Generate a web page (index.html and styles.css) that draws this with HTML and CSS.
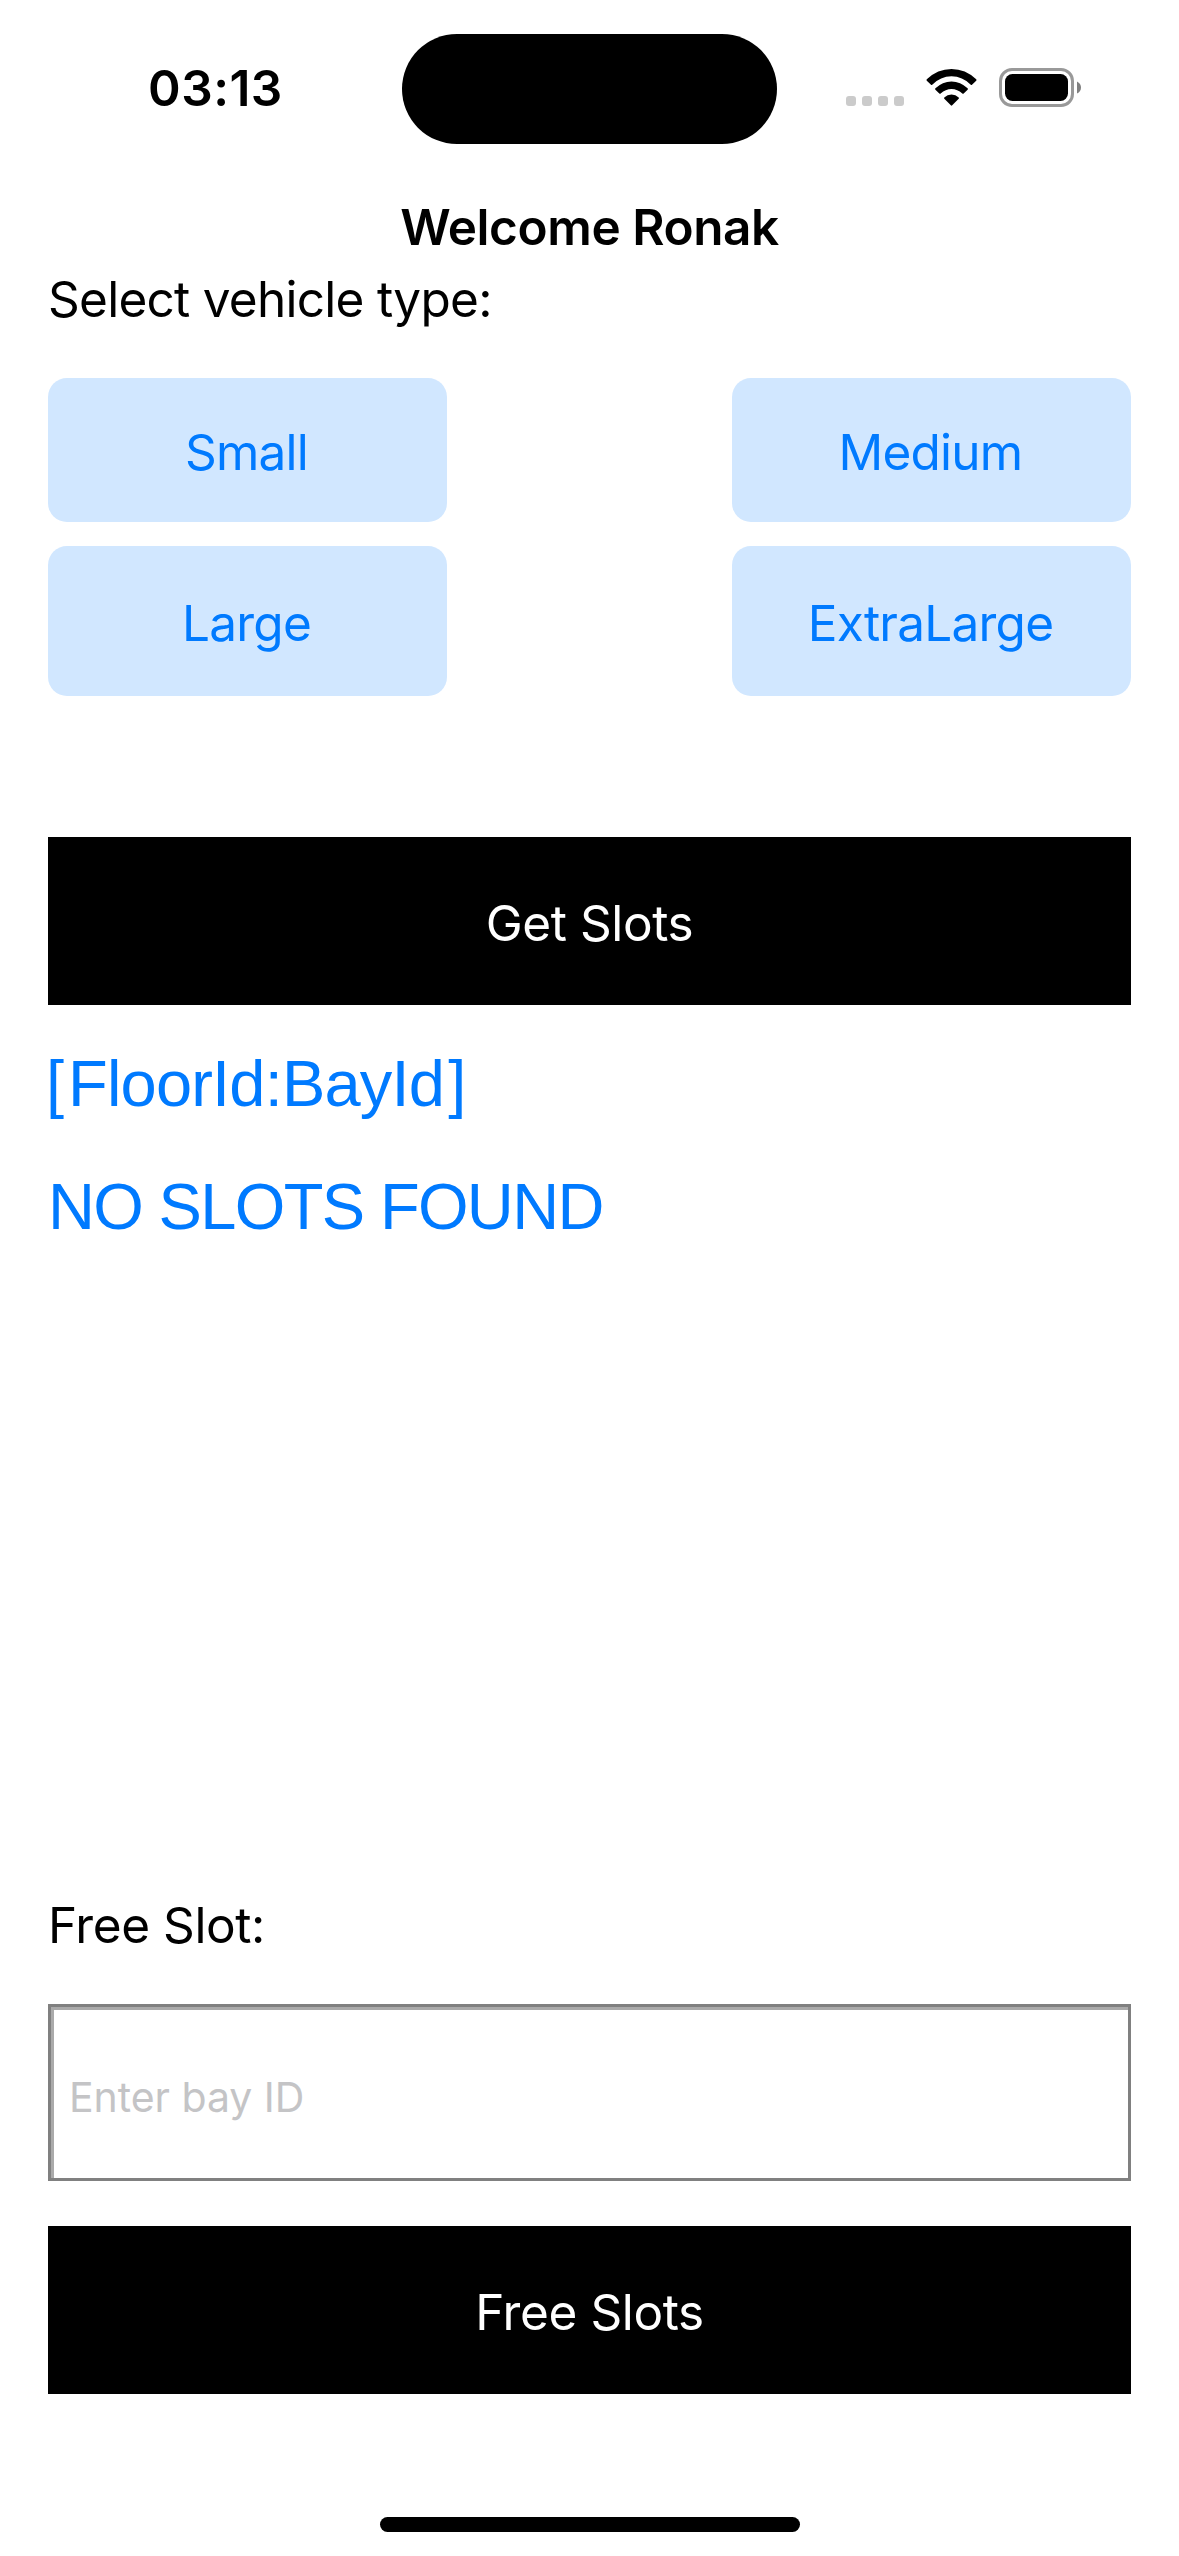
FILE: index.html
```html
<!DOCTYPE html>
<html lang="en">
<head>
<meta charset="utf-8">
<title>Welcome Ronak</title>
<link rel="stylesheet" href="styles.css">
</head>
<body>
<div class="screen">
  <header class="status-bar">
    <div class="time">03:13</div>
    <div class="island"></div>
    <div class="indicators">
      <svg class="signal" width="58" height="10" viewBox="0 0 58 10" fill="#cbcbcb">
        <rect width="10" height="10" rx="3"/>
        <rect x="16" width="10" height="10" rx="3"/>
        <rect x="32" width="10" height="10" rx="3"/>
        <rect x="48" width="10" height="10" rx="3"/>
      </svg>
      <svg class="wifi" width="51" height="37" viewBox="0 0 51 37">
        <path d="M.8 10.3Q11.5 0 25.5 0T50.2 10.3Q50.9 11 50.2 11.7L46 15.8Q45.4 16.2 44.8 15.7Q36.5 7.2 25.5 7.2T6.2 15.7Q5.6 16.2 5 15.8L.8 11.7Q.1 11 .8 10.3Z"/>
        <path d="M9.4 19.3Q16.5 12.4 25.5 12.4T41.6 19.3Q42.3 20 41.6 20.7L37.7 24.5Q37 25 36.3 24.5Q31.5 20 25.5 20T14.7 24.5Q14 25 13.3 24.5L9.4 20.7Q8.7 20 9.4 19.3Z"/>
        <path d="M18.3 28.5Q21.3 25.4 25.5 25.4T32.7 28.5Q33.2 29.1 32.7 29.7L26.2 36.3Q25.5 37 24.8 36.3L18.3 29.7Q17.8 29.1 18.3 28.5Z"/>
      </svg>
      <svg class="battery" width="82" height="39" viewBox="0 0 82 39">
        <rect x="1.5" y="1.5" width="72" height="36" rx="11.5" fill="none" stroke="#999" stroke-width="3"/>
        <rect x="6" y="6" width="63" height="27" rx="7.5"/>
        <path d="M78 13.5Q82 15.5 82 19.5T78 25.5Z" fill="#808080"/>
      </svg>
    </div>
  </header>

  <main class="content">
    <h1 class="title">Welcome Ronak</h1>
    <p class="label select-label">Select vehicle type:</p>
    <div class="types">
      <button class="type">Small</button>
      <button class="type">Medium</button>
      <button class="type">Large</button>
      <button class="type">ExtraLarge</button>
    </div>
    <button class="action get-slots">Get Slots</button>
    <div class="results">
      <p class="result key"><span class="open">[</span><span>FloorId:BayId</span><span class="close">]</span></p>
      <p class="result empty">NO SLOTS FOUND</p>
    </div>
    <label class="label free-label" for="bay">Free Slot:</label>
    <input class="field" id="bay" type="text" placeholder="Enter bay ID">
    <button class="action free-slots">Free Slots</button>
  </main>

  <div class="home-bar"></div>
</div>
</body>
</html>
```
FILE: styles.css
```css
* {
  box-sizing: border-box;
}

body {
  margin: 0;
  background: #fff;
  color: #000;
  font-family: Inter, sans-serif;
  font-size: 49.5px;
}

.screen {
  display: flex;
  flex-direction: column;
  width: 1179px;
  height: 2556px;
  padding-bottom: 24px;
}

.status-bar {
  display: grid;
  grid-template-columns: 402px 375px 402px;
  height: 177px;
  padding-top: 33px;
  align-items: start;
}

.time {
  padding-left: 148px;
  line-height: 110px;
  font-weight: 600;
  letter-spacing: 0.5px;
}

.island {
  height: 110px;
  margin-top: 1px;
  border-radius: 55px;
  background: #000;
}

.indicators {
  display: flex;
  align-items: flex-end;
  height: 74px;
  padding-left: 69px;
}

.signal {
  margin-bottom: 1px;
}

.wifi {
  margin: 0 22px 1px;
}

.content {
  display: flex;
  flex: 1;
  flex-direction: column;
  padding: 0 48px 123px;
}

.title {
  margin: 0;
  font-size: inherit;
  font-weight: 600;
  line-height: 100px;
  letter-spacing: -0.43px;
  text-align: center;
}

.label {
  margin: 0;
  line-height: 44px;
}

.select-label {
  letter-spacing: -0.73px;
}

.types {
  display: grid;
  grid-template-columns: 399px 399px;
  grid-template-rows: 144px 150px;
  justify-content: space-between;
  row-gap: 24px;
  margin-top: 57px;
}

button {
  margin: 0;
  padding: 4px 0 0;
  border: 0;
  font: inherit;
}

.type {
  padding-right: 2px;
  border-radius: 19px;
  background: #d1e7ff;
  color: #007aff;
  letter-spacing: -0.75px;
}

.action {
  height: 168px;
  background: #000;
  color: #fff;
  letter-spacing: -0.4px;
}

.get-slots {
  margin-top: 141px;
}

.results {
  margin-top: 17px;
  color: #007aff;
  font-family: "Liberation Sans", Arial, sans-serif;
  font-size: 65px;
  line-height: 123px;
}

.result {
  margin: 0;
  white-space: nowrap;
}

.key {
  margin-left: -2px;
  letter-spacing: -0.8px;
}

.open {
  display: inline-block;
  width: 22px;
}

.close {
  margin-left: 4px;
}

.empty {
  letter-spacing: -1.65px;
}

.free-label {
  margin-top: auto;
  letter-spacing: -0.43px;
}

.field {
  height: 177px;
  margin: 57px 0 45px;
  padding: 9px 0 0 18px;
  border: 3px solid #808080;
  border-radius: 0;
  background: #fff;
  box-shadow: inset 3px 3px #aaa;
  color: #000;
  font: 41px Inter, sans-serif;
  letter-spacing: -0.05px;
}

.field::placeholder {
  color: #c4c4c6;
  opacity: 1;
}

.home-bar {
  width: 420px;
  height: 15px;
  margin: 0 auto;
  border-radius: 8px;
  background: #000;
}
```
